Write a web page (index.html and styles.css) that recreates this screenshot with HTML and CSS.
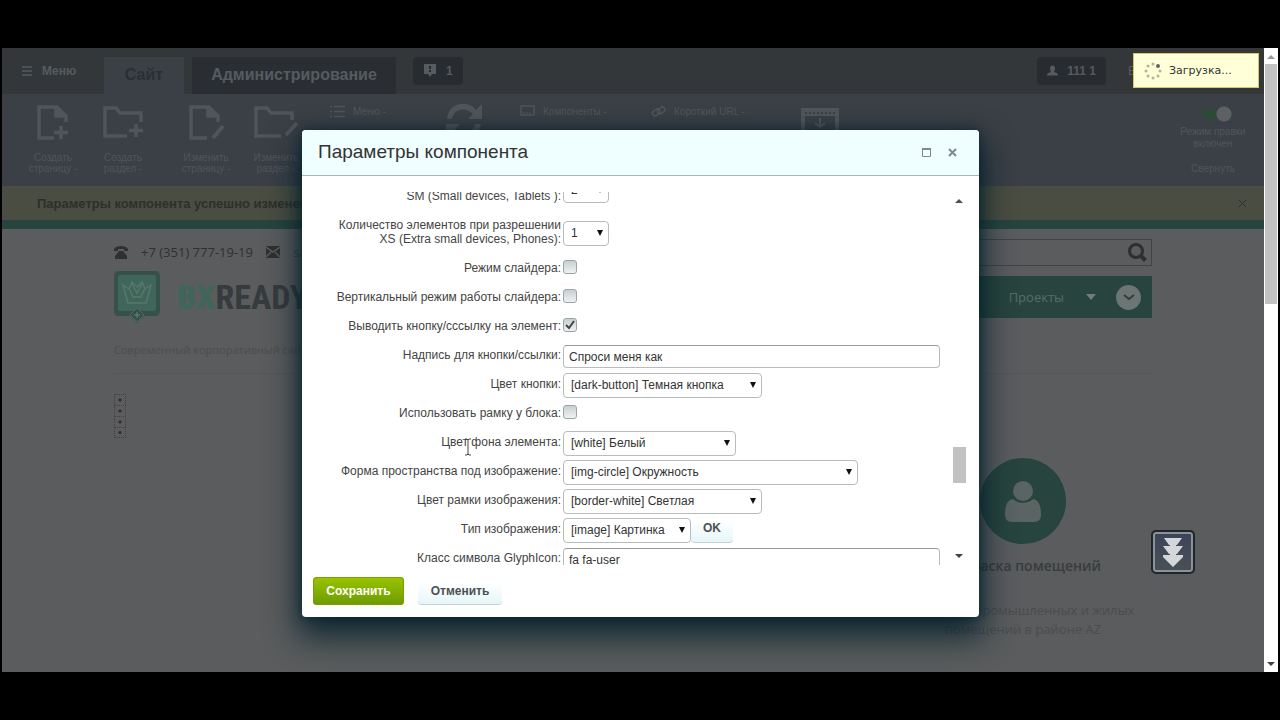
FILE: index.html
```html
<!DOCTYPE html>
<html lang="ru">
<head>
<meta charset="utf-8">
<title>Параметры компонента</title>
<link rel="stylesheet" href="styles.css">
</head>
<body>
<div class="screen">
  <div class="page">
    <header class="admin-tabs">
      <button class="menu-btn"><svg width="10" height="10" viewBox="0 0 10 10"><path d="M0 1h10M0 5h10M0 9h10" stroke="currentColor" stroke-width="1.5"/></svg>Меню</button>
      <a class="tab tab-on" href="#">Сайт</a>
      <a class="tab tab-off" href="#">Администрирование</a>
      <button class="chip"><svg width="14" height="14" viewBox="0 0 14 14"><path d="M1 0h12v10H9l-2 3-2-3H1z" fill="currentColor"/><path d="M7 2v3M7 6v2" stroke="#25292d" stroke-width="2"/></svg>1</button>
      <button class="chip chip-user"><svg width="11" height="12" viewBox="0 0 11 12"><path d="M3 3.500a2.500 3 0 0 1 5 0c0 1.500-.7 2.500-1 3 .5 1 4 1 4 4H0c0-3 3.500-3 4-4-.4-.5-1-1.500-1-3z" fill="currentColor"/></svg>111 1</button>
      <a class="exit" href="#">Выйти</a>
    </header>
    <section class="ribbon">
      <div class="tools">
        <button class="tool"><svg width="38" height="38" viewBox="0 0 38 38" fill="none" stroke="currentColor" stroke-width="3.500"><path d="M20 34H5V3h18l9 9v6M22 3v9h10"/><path d="M23 4l9 9h-9z" fill="currentColor" stroke="none"/><path d="M27 22v13M20 28.500h14"/></svg><span>Создать<br>страницу -</span></button>
        <button class="tool"><svg width="40" height="38" viewBox="0 0 40 38" fill="none" stroke="currentColor" stroke-width="3.500"><path d="M24 32H2V4h11l4 5h21v9"/><path d="M33 20v13M26 26.500h14"/></svg><span>Создать<br>раздел -</span></button>
        <button class="tool tool-gap"><svg width="38" height="38" viewBox="0 0 38 38" fill="none" stroke="currentColor" stroke-width="3.500"><path d="M20 34H4V3h18l9 9v6M21 3v9h10"/><path d="M22 4l9 9h-9z" fill="currentColor" stroke="none"/><path d="M26 34l10-12" stroke-width="4"/></svg><span>Изменить<br>страницу -</span></button>
        <button class="tool"><svg width="44" height="38" viewBox="0 0 44 38" fill="none" stroke="currentColor" stroke-width="3.500"><path d="M27 32H2V4h11l4 5h21v7"/><path d="M32 31l11-12" stroke-width="4"/></svg><span>Изменить<br>раздел -</span></button>
      </div>
      <button class="mini mini-menu"><svg width="15" height="13" viewBox="0 0 15 13" stroke="currentColor"><path d="M0 1.500h2M4 1.500h11M0 6.500h2M4 6.500h11M0 11.500h2M4 11.500h11" stroke-width="1.500"/></svg>Меню -</button>
      <svg class="big" width="38" height="38" viewBox="0 0 38 38"><path d="M1 17C2-1 24-2 30 8l6-6v15H22l5-5C20 5 8 6 6 17zM0 22h14l-5 5c7 7 18 4 20-5h6c-2 14-20 18-28 8l-7 5z" fill="currentColor"/></svg>
      <button class="mini mini-comp"><svg width="15" height="12" viewBox="0 0 15 12" fill="none" stroke="currentColor"><rect x="1" y="1" width="13" height="9" stroke-width="1.500"/><path d="M3 8h2M6 8h2M9 8h2"/></svg>Компоненты -</button>
      <button class="mini"><svg width="15" height="13" viewBox="0 0 15 13" fill="none" stroke="currentColor" stroke-width="1.500"><rect x="1" y="5" width="8" height="5" rx="2.500" transform="rotate(-35 5 7)"/><rect x="6" y="3" width="8" height="5" rx="2.500" transform="rotate(-35 10 5)"/></svg>Короткий URL -</button>
      <svg class="big big-win" width="38" height="38" viewBox="0 0 38 38"><path d="M0 0h38v38H0zM4 8v26h30V8z" fill="currentColor" fill-rule="evenodd"/><path d="M4 5h30" stroke="#3b3f46" stroke-width="2" stroke-dasharray="2 2"/><path d="M19 10v9M14 15l5 4 5-4" fill="none" stroke="currentColor" stroke-width="2"/></svg>
      <div class="mode"><span class="toggle"></span><span>Режим правки<br>включен</span><a class="fold" href="#">Свернуть</a></div>
    </section>
    <div class="notice"><span>Параметры компонента успешно изменены</span><button class="notice-x" aria-label="Закрыть уведомление"><svg width="9" height="9" viewBox="0 0 9 9"><path d="M1 1l7 7M8 1L1 8" stroke="currentColor"/></svg></button></div>
    <main class="site">
      <div class="site-head">
        <div class="brand">
          <div class="contacts">
            <svg width="14" height="13" viewBox="0 0 14 13" fill="currentColor"><path d="M0 5V3c2-4 12-4 14 0v2h-4V3H4v2z"/><path d="M5 5h4l4 5v3H1v-3z"/></svg>
            <span>+7 (351) 777-19-19</span>
            <svg width="14" height="12" viewBox="0 0 14 12"><path d="M0 0h14v12H0z" fill="currentColor"/><path d="M0 1l7 5 7-5M0 11l5-5M14 11L9 6" fill="none" stroke="#5a5c5d" stroke-width="1.500"/></svg>
            <a class="mail" href="#">sale@bxready.ru</a>
          </div>
          <div class="logo">
            <svg width="46" height="52" viewBox="0 0 46 52"><path d="M5 0h36q5 0 5 5v35q0 5-5 5H30l-7 7-7-7H5q-5 0-5-5V5q0-5 5-5z" fill="#355149"/><rect x="4" y="4" width="38" height="36" rx="2" fill="#40655a"/><path d="M9 14l5 18h18l5-18-6 4-3-7-5 5-5-5-3 7zM15 17l4 9h8l4-9M18 13l5 9 5-9" fill="none" stroke="#58776b" stroke-width="1.500"/><path d="M16 44l7-7 7 7-7 7z" fill="#355149" stroke="#4b6c60"/><path d="M23 41v6M20 44h6" stroke="#6b8579"/></svg>
            <span class="name"><b>BX</b>READY</span>
          </div>
          <p class="slogan">Современный корпоративный сайт</p>
        </div>
        <div class="right">
          <div class="search"><input type="search" aria-label="Поиск по сайту"><svg width="19" height="19" viewBox="0 0 19 19" fill="none" stroke="currentColor"><circle cx="8" cy="8" r="6.500" stroke-width="3"/><path d="M12.500 12.500l5 5" stroke-width="4"/></svg></div>
          <nav class="nav"><a href="#">Проекты</a><svg width="10" height="6" viewBox="0 0 10 6"><path d="M0 0h10L5 6z" fill="#6d7f7a"/></svg><button class="round" aria-label="Ещё"><svg width="12" height="7" viewBox="0 0 12 7"><path d="M1 1l5 4 5-4" fill="none" stroke="#303f3c" stroke-width="2"/></svg></button></nav>
        </div>
      </div>
      <div class="content">
        <div class="dots"><i></i><i></i><i></i><i></i></div>
        <section class="service">
          <div class="disc"><svg width="38" height="41" viewBox="0 0 38 41" fill="#5a6462"><circle cx="19" cy="10" r="10"/><path d="M9 18c5 5 15 5 20 0 6 1 8 7 8 16q0 7-7 7H8q-7 0-7-7c0-9 2-15 8-16z"/></svg></div>
          <h2>Покраска помещений</h2>
          <p>Покраска промышленных и жилых помещений в районе AZ</p>
        </section>
      </div>
      <button class="down" aria-label="Вниз страницы"><svg width="22" height="29" viewBox="0 0 22 29" fill="#d3d7d9"><path d="M2 0h18l-5 7H7zM1 8h20l-6 8H7zM1 17h20v2L11 29 1 19z"/><path d="M8 6h6v12H8z"/></svg></button>
    </main>

    <div class="loading" role="status"><svg width="18" height="18" viewBox="0 0 18 18" fill="#b4b49d"><circle cx="9" cy="2" r="1.500"/><circle cx="14" cy="4" r="2" fill="#666"/><circle cx="16" cy="9" r="1.500"/><circle cx="14" cy="14" r="1.500"/><circle cx="9" cy="16" r="1.500"/><circle cx="4" cy="14" r="1.500"/><circle cx="2" cy="9" r="1.500"/><circle cx="4" cy="4" r="1.500"/></svg>Загрузка...</div>

    <form class="dialog" role="dialog" aria-labelledby="dlg-title">
      <header class="dlg-head">
        <h1 id="dlg-title">Параметры компонента</h1>
        <button type="button" aria-label="Развернуть"><svg width="9" height="9" viewBox="0 0 9 9"><path d="M.5 1h8v7.500h-8z" fill="none" stroke="currentColor"/><path d="M0 1h9" stroke="currentColor" stroke-width="2"/></svg></button>
        <button type="button" aria-label="Закрыть"><svg width="9" height="9" viewBox="0 0 9 9"><path d="M1 1l7 7M8 1L1 8" stroke="currentColor" stroke-width="2"/></svg></button>
      </header>
      <div class="dlg-body">
        <div class="params">
          <div class="row two"><label for="sm">Количество элементов при разрешении SM (Small devices, Tablets ):</label><span class="sel"><select id="sm" class="w-s"><option>2</option></select></span></div>
          <div class="row two"><label for="xs">Количество элементов при разрешении XS (Extra small devices, Phones):</label><span class="sel"><select id="xs" class="w-s"><option>1</option></select></span></div>
          <div class="row"><label for="slider">Режим слайдера:</label><input type="checkbox" id="slider"></div>
          <div class="row"><label for="vert">Вертикальный режим работы слайдера:</label><input type="checkbox" id="vert"></div>
          <div class="row"><label for="btn">Выводить кнопку/сссылку на элемент:</label><input type="checkbox" id="btn" checked></div>
          <div class="row"><label for="cap">Надпись для кнопки/ссылки:</label><input type="text" id="cap" value="Спроси меня как"></div>
          <div class="row"><label for="bcolor">Цвет кнопки:</label><span class="sel"><select id="bcolor" class="w-l"><option>[dark-button] Темная кнопка</option></select></span></div>
          <div class="row"><label for="frame">Использовать рамку у блока:</label><input type="checkbox" id="frame"></div>
          <div class="row"><label for="bg">Цвет фона элемента:</label><span class="sel"><select id="bg" class="w-m"><option>[white] Белый</option></select></span></div>
          <div class="row"><label for="shape">Форма пространства под изображение:</label><span class="sel"><select id="shape" class="w-xl"><option>[img-circle] Окружность</option></select></span></div>
          <div class="row"><label for="border">Цвет рамки изображения:</label><span class="sel"><select id="border" class="w-l"><option>[border-white] Светлая</option></select></span></div>
          <div class="row"><label for="type">Тип изображения:</label><span class="sel"><select id="type" class="w-n"><option>[image] Картинка</option></select></span><button type="button" class="plain ok">OK</button></div>
          <div class="row"><label for="glyph">Класс символа GlyphIcon:</label><input type="text" id="glyph" value="fa fa-user"></div>
        </div>
        <div class="dlg-scroll"><i class="up"></i><i class="thumb"></i><i class="dn"></i></div>
      </div>
      <footer class="dlg-foot"><button type="button" class="save">Сохранить</button><button type="button" class="plain">Отменить</button></footer>
      <svg class="caret" width="8" height="18" viewBox="0 0 8 18"><path d="M1 1h2l1 1 1-1h2M4 2v14M1 17h2l1-1 1 1h2" fill="none" stroke="#444"/></svg>
    </form>
  </div>
  <div class="page-scroll"><i class="up"></i><i class="thumb"></i><i class="dn"></i></div>
</div>
</body>
</html>
```
FILE: styles.css
```css
* { box-sizing: border-box; }
body {
  margin: 0;
  padding: 48px 2px;
  height: 100vh;
  background: #000;
  font-family: "Liberation Sans", Arial, sans-serif;
  font-size: 12px;
}
button { border: 0; background: none; padding: 0; color: inherit; font: inherit; }
a { color: inherit; text-decoration: none; }
h1, h2, p { margin: 0; font-weight: normal; }
svg { flex: none; }

.screen { display: flex; height: 100%; }
.page {
  position: relative;
  flex: 1;
  min-width: 0;
  display: flex;
  flex-direction: column;
  background: #5a5c5d;
  overflow: hidden;
}

/* page scrollbar */
.page-scroll { width: 14px; background: #fff; display: flex; flex-direction: column; align-items: center; }
.page-scroll .thumb { width: 12px; height: 240px; background: #c2c2c2; margin-bottom: auto; }
.page-scroll .up { margin: 7px 0 5px; border-bottom-color: #999; }
.page-scroll .dn { margin-bottom: 6px; }
.up, .dn { border: 4px solid transparent; }
.up { border-top: 0; border-bottom: 4px solid #505050; }
.dn { border-bottom: 0; border-top: 4px solid #404040; }

/* admin panel */
.admin-tabs { display: flex; height: 46px; background: #33373a; color: #565b60; font-weight: bold; }
.menu-btn { display: flex; gap: 10px; width: 102px; padding-left: 20px; align-items: center; }
.tab { display: flex; align-items: center; justify-content: center; margin-top: 9px; padding-bottom: 2px; font-size: 16px; }
.tab-on { width: 80px; background: #3b4047; color: #2a2f33; }
.tab-off { width: 204px; margin-left: 8px; background: #2a2e32; }
.chip { display: flex; align-items: center; gap: 9px; height: 28px; margin: 9px 0 0 17px; padding: 0 10px; background: #282c30; border-radius: 4px; }
.chip-user { margin-left: auto; }
.exit { width: 158px; padding: 16px 0 0 22px; font-weight: normal; }

.ribbon { display: flex; align-items: flex-start; height: 92px; padding-left: 16px; background: #3b3f46; color: #51555b; font-size: 10px; line-height: 11px; }
.tools { display: flex; width: 312px; }
.tool { display: flex; flex-direction: column; align-items: center; gap: 10px; width: 70px; padding-top: 10px; }
.tool-gap { margin-left: 13px; }
.mini { display: flex; align-items: center; gap: 8px; padding-top: 11px; white-space: nowrap; }
.mini-menu { width: 116px; }
.mini-comp { width: 131px; margin-left: 36px; }
.big { margin-top: 8px; }
.big-win { margin: 14px 0 0 56px; }
.mode { margin-left: auto; width: 102px; display: flex; flex-direction: column; align-items: center; text-align: center; padding-top: 12px; gap: 4px; line-height: 12px; }
.toggle { display: block; width: 30px; height: 16px; margin-left: 8px; background: radial-gradient(circle at 22px 8px, #5d6165 7px, transparent 8px), linear-gradient(transparent 3px, #2d4a39 3px, #2d4a39 13px, transparent 13px); border-radius: 8px; }
.fold { margin-top: 9px; }

.notice { display: flex; align-items: center; justify-content: space-between; height: 34px; padding: 0 17px 0 35px; background: #4a4d41; color: #2c302c; font-size: 13px; font-weight: bold; }

/* site */
.site { flex: 1; min-height: 0; border-top: 9px solid #27443e; position: relative; }
.site-head { display: flex; max-width: 1038px; margin: 0 auto; height: 144px; font-family: "Open Sans", sans-serif; }
.brand { width: 260px; white-space: nowrap; color: #2e3131; }
.contacts { display: flex; align-items: center; gap: 13px; height: 46px; font-size: 13px; }
.mail { color: #2b4658; }
.logo { display: flex; align-items: center; gap: 17px; margin-top: -4px; height: 52px; }
.name { font: bold 36px/40px "Roboto Condensed", "Liberation Sans Narrow", "DejaVu Sans Condensed", sans-serif; font-size: 34px; color: #363b3d; }
.name b { color: #40655a; }
.slogan { padding-top: 19px; color: #4b4e4f; font-size: 11px; line-height: 16px; }
.right { flex: 1; padding-top: 10px; }
.search { display: flex; align-items: center; height: 27px; padding-right: 4px; border: 1px solid #414445; color: #2c3031; }
.search input { flex: 1; border: 0; background: none; }
.nav { display: flex; align-items: center; justify-content: flex-end; height: 42px; margin-top: 10px; padding-right: 11px; background: #27443e; color: #586c67; font-size: 13px; }
.nav a { margin-right: 22px; }
.round { display: flex; align-items: center; justify-content: center; width: 25px; height: 25px; margin-left: 20px; border-radius: 50%; background: #6c7474; }

.content { max-width: 1038px; margin: 0 auto; padding-top: 20px; display: flex; justify-content: space-between; border-top: 1px solid #545758; }
.dots { width: 12px; }
.dots i { display: block; height: 11px; border: 1px dotted #453f44; border-bottom-width: 0; background: radial-gradient(circle, #372a2f 1px, transparent 2px); }
.dots i:last-child { border-bottom-width: 1px; }
.service { width: 258px; padding-top: 64px; display: flex; flex-direction: column; align-items: center; text-align: center; font-family: "Open Sans", sans-serif; }
.disc { display: flex; align-items: center; justify-content: center; width: 86px; height: 86px; border-radius: 50%; background: #27443e; }
.service h2 { margin-top: 11px; font-size: 14px; line-height: 22px; font-weight: 600; color: #393c3d; white-space: nowrap; }
.service p { padding: 24px 16px 0; color: #4a4d4e; font-size: 13px; line-height: 19px; }
.down { position: absolute; right: 69px; bottom: 98px; display: flex; align-items: center; justify-content: center; width: 44px; height: 44px; border: 2px solid #20262c; border-radius: 5px; background: linear-gradient(#3b4359, #4b5056); box-shadow: inset 0 0 0 2px #8b939a; }

.loading { position: absolute; top: 5px; right: 5px; display: flex; align-items: center; gap: 7px; width: 126px; height: 35px; padding-left: 10px; background: #ffffd8; border: 1px solid #d9c766; color: #333; font: 11px "DejaVu Sans", sans-serif; }

/* dialog */
.dialog { position: absolute; top: 82px; left: 300px; right: 285px; background: #fff; border-radius: 4px; box-shadow: 0 16px 32px 4px rgba(0, 30, 42, .85), 0 0 12px rgba(0, 30, 42, .7); }
.dlg-head { display: flex; align-items: center; height: 46px; padding: 0 22px 0 16px; background: #effeff; border-bottom: 1px solid #aab6ba; border-radius: 4px 4px 0 0; color: #7b8b90; }
.dlg-head h1 { flex: 1; font-size: 19px; line-height: 22px; padding-bottom: 2px; color: #333; }
.dlg-head button { display: flex; margin-left: 17px; }
.dlg-body { display: flex; justify-content: space-between; height: 373px; margin: 16px 13px 0 11px; overflow: hidden; }
.params { flex: 1; margin-top: -25px; color: #444; }
.row { display: flex; align-items: center; height: 29px; font-size: 12px; line-height: 14px; }
.row.two { height: 43px; }
.row label { width: 248px; flex: none; padding-left: 18px; margin-right: 2px; text-align: right; }
.row input, .row select { font: 12px "Liberation Sans", Arial, sans-serif; color: #333; margin: 0; }
.row input[type="text"] { flex: 1; margin: 4px 12px 0 0; height: 23px; padding: 0 5px; border: 1px solid #b8bcbe; border-top-color: #999; border-radius: 4px; background: #fff; }
.row input[type="checkbox"] { appearance: none; width: 14px; height: 14px; margin-bottom: 2px; border: 1px solid #9aa5a8; border-radius: 3px; background: linear-gradient(#c8cfd1, #eef2f2); }
.row input[type="checkbox"]:checked { background: url("data:image/svg+xml,%3Csvg xmlns='http://www.w3.org/2000/svg' viewBox='0 0 12 12'%3E%3Cpath d='M2 6l3 3 5-7' fill='none' stroke='%23444' stroke-width='2'/%3E%3C/svg%3E") center / 12px no-repeat, linear-gradient(#c8cfd1, #eef2f2); }
.sel { position: relative; margin-top: 3px; }
.sel::after { content: ""; position: absolute; right: 6px; top: 9px; border: 3px solid transparent; border-top: 6px solid #111; border-bottom: 0; pointer-events: none; }
.row select { display: block; appearance: none; height: 25px; padding: 0 7px; border: 1px solid #b8bcbe; border-radius: 4px; background: #fff; }
.w-s { width: 46px; }
.w-n { width: 128px; }
.w-m { width: 173px; }
.w-l { width: 199px; }
.w-xl { width: 295px; }
.plain { height: 28px; border-bottom: 1px solid #c3d2d5; border-radius: 4px; background: linear-gradient(#fff 20%, #e6f6f8); color: #4b5155; font-weight: bold; font-size: 12px; }
.ok { width: 42px; }
.dlg-scroll { width: 14px; display: flex; flex-direction: column; align-items: center; }
.dlg-scroll .up { margin: 7px 0 auto; }
.dlg-scroll .thumb { width: 13px; height: 36px; margin-bottom: 71px; background: #c2c2c2; }
.dlg-scroll .dn { margin-bottom: 7px; }
.dlg-foot { display: flex; gap: 14px; padding: 12px 11px; }
.dlg-foot .plain { width: 84px; }
.save { width: 91px; height: 28px; border-radius: 4px; background: linear-gradient(#9bc400, #6c9b00); color: #fff; font-weight: bold; box-shadow: inset 0 0 0 1px #76a100; }
.caret { position: absolute; left: 162px; top: 308px; }
```
